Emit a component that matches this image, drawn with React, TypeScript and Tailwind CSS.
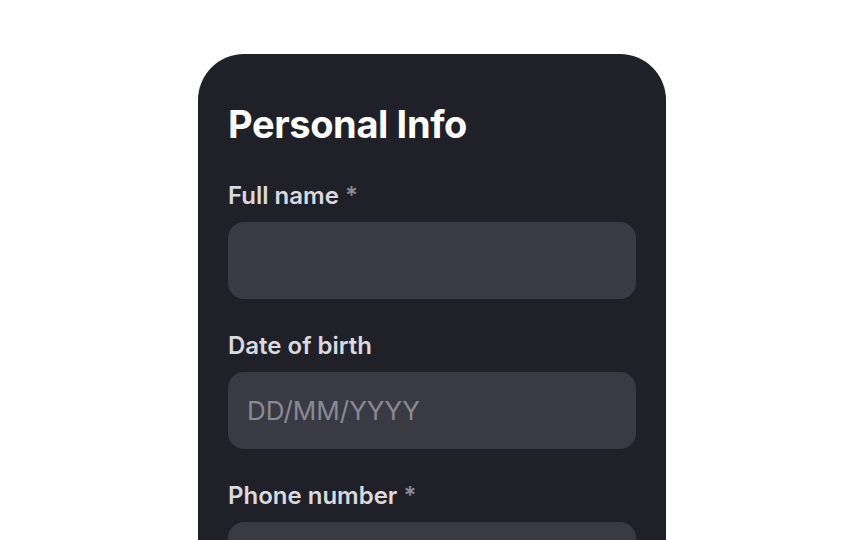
export default function App() {
  const fields = [
    { label: "Full name", required: true, placeholder: "" },
    { label: "Date of birth", required: false, placeholder: "DD/MM/YYYY" },
    { label: "Phone number", required: true, placeholder: "" },
  ];

  return (
    <div className="h-screen overflow-hidden bg-white pt-[54px] font-['Inter','Noto_Sans',sans-serif]">
      <div className="mx-auto w-[468px] h-[600px] rounded-[46px] bg-[#1f2028] px-[30px] pt-[51px]">
        <h1 className="text-[38px] leading-[38px] font-bold tracking-[-0.01em] text-white">
          Personal Info
        </h1>
        <div className="mt-[39px] flex flex-col gap-[33px]">
          {fields.map((f) => (
            <div key={f.label}>
              <label className="block text-[24px] leading-[28px] font-semibold text-[#d9d9de]">
                {f.label}
                {f.required && <span className="text-[#8b8b95]"> *</span>}
              </label>
              <input
                placeholder={f.placeholder}
                className="mt-[12px] block w-full h-[77px] rounded-[16px] bg-[#3a3a44] px-[19px] text-[26px] text-white placeholder:text-[#8a8a95] outline-none"
              />
            </div>
          ))}
        </div>
      </div>
    </div>
  );
}
